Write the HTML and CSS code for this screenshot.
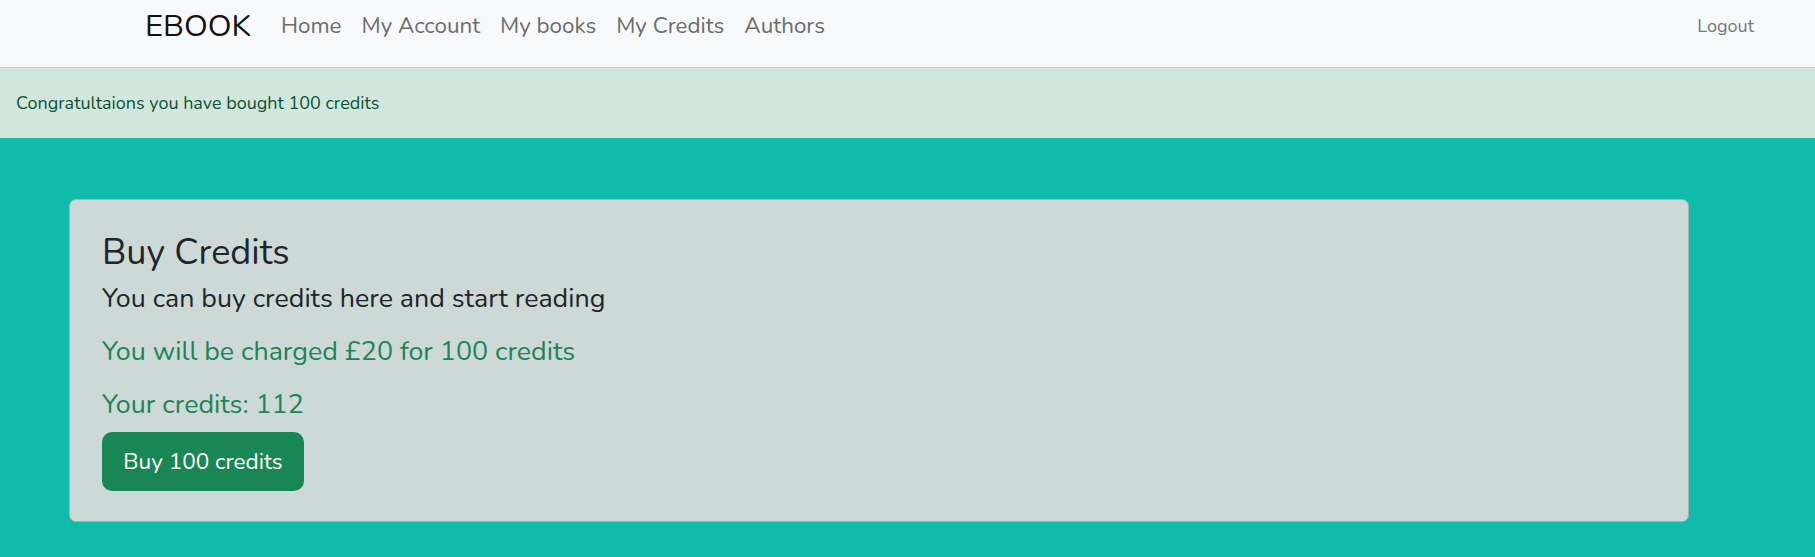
FILE: index.html
```html
<!DOCTYPE html>
<html lang="en">
<head>
<meta charset="utf-8">
<title>EBOOK - Buy Credits</title>
<link rel="stylesheet" href="styles.css">
</head>
<body>
<nav class="navbar">
  <div class="nav-left">
    <a class="brand" href="#">EBOOK</a>
    <ul class="nav-links">
      <li><a href="#">Home</a></li>
      <li><a href="#">My Account</a></li>
      <li><a href="#">My books</a></li>
      <li><a href="#">My Credits</a></li>
      <li><a href="#">Authors</a></li>
    </ul>
  </div>
  <a class="logout" href="#">Logout</a>
</nav>
<div class="alert">Congratultaions you have bought 100 credits</div>
<main class="main">
  <section class="card">
    <h2 class="card-title">Buy Credits</h2>
    <p class="lead">You can buy credits here and start reading</p>
    <p class="charge">You will be charged £20 for 100 credits</p>
    <p class="credits">Your credits: 112</p>
    <button class="btn-buy" type="button">Buy 100 credits</button>
  </section>
</main>
</body>
</html>
```

FILE: styles.css
```css
* { box-sizing: border-box; }
html, body { margin: 0; padding: 0; }
body {
  font-family: "Nunito", "Lato", "Open Sans", sans-serif;
  background: #10bbab;
  color: #212529;
}
a { text-decoration: none; }

.navbar {
  height: 67px;
  background: #f8f9fa;
  display: flex;
  align-items: center;
  justify-content: space-between;
  padding: 0 61px 16px 145px;
}
.nav-left { display: flex; align-items: center; }
.brand {
  font-size: 31px;
  color: #111;
  margin-right: 20px;
}
.nav-links {
  list-style: none;
  display: flex;
  margin: 0;
  padding: 0;
}
.nav-links a {
  display: block;
  font-size: 22.4px;
  color: #6c6c6c;
  padding: 0 10px;
}
.logout {
  font-size: 18px;
  color: #777;
}

.alert {
  background: #d1e7dd;
  border-top: 1px solid #badbcc;
  color: #0f5132;
  font-size: 18px;
  height: 71px;
  display: flex;
  align-items: center;
  padding: 0 16px;
}

.main {
  padding: 61px 126px 35px 69px;
}
.card {
  background: #cdd9d7;
  border: 1px solid #a9b2b0;
  border-radius: 7px;
  padding: 31px 32px 30px;
  display: flex;
  flex-direction: column;
  align-items: flex-start;
}
.card-title {
  font-size: 36px;
  font-weight: 400;
  margin: 0 0 6px;
  line-height: 1.2;
}
.lead {
  font-size: 26.8px;
  margin: 0 0 15px;
  line-height: 1.4;
}
.charge, .credits {
  font-size: 26.8px;
  color: #1c8457;
  margin: 0 0 16px;
  line-height: 1.4;
}
.credits { margin-bottom: 8px; }
.btn-buy {
  font-family: inherit;
  font-size: 22.6px;
  color: #fff;
  background: #198754;
  border: none;
  border-radius: 10px;
  width: 202px;
  height: 59px;
  padding: 0;
  cursor: pointer;
}
```
